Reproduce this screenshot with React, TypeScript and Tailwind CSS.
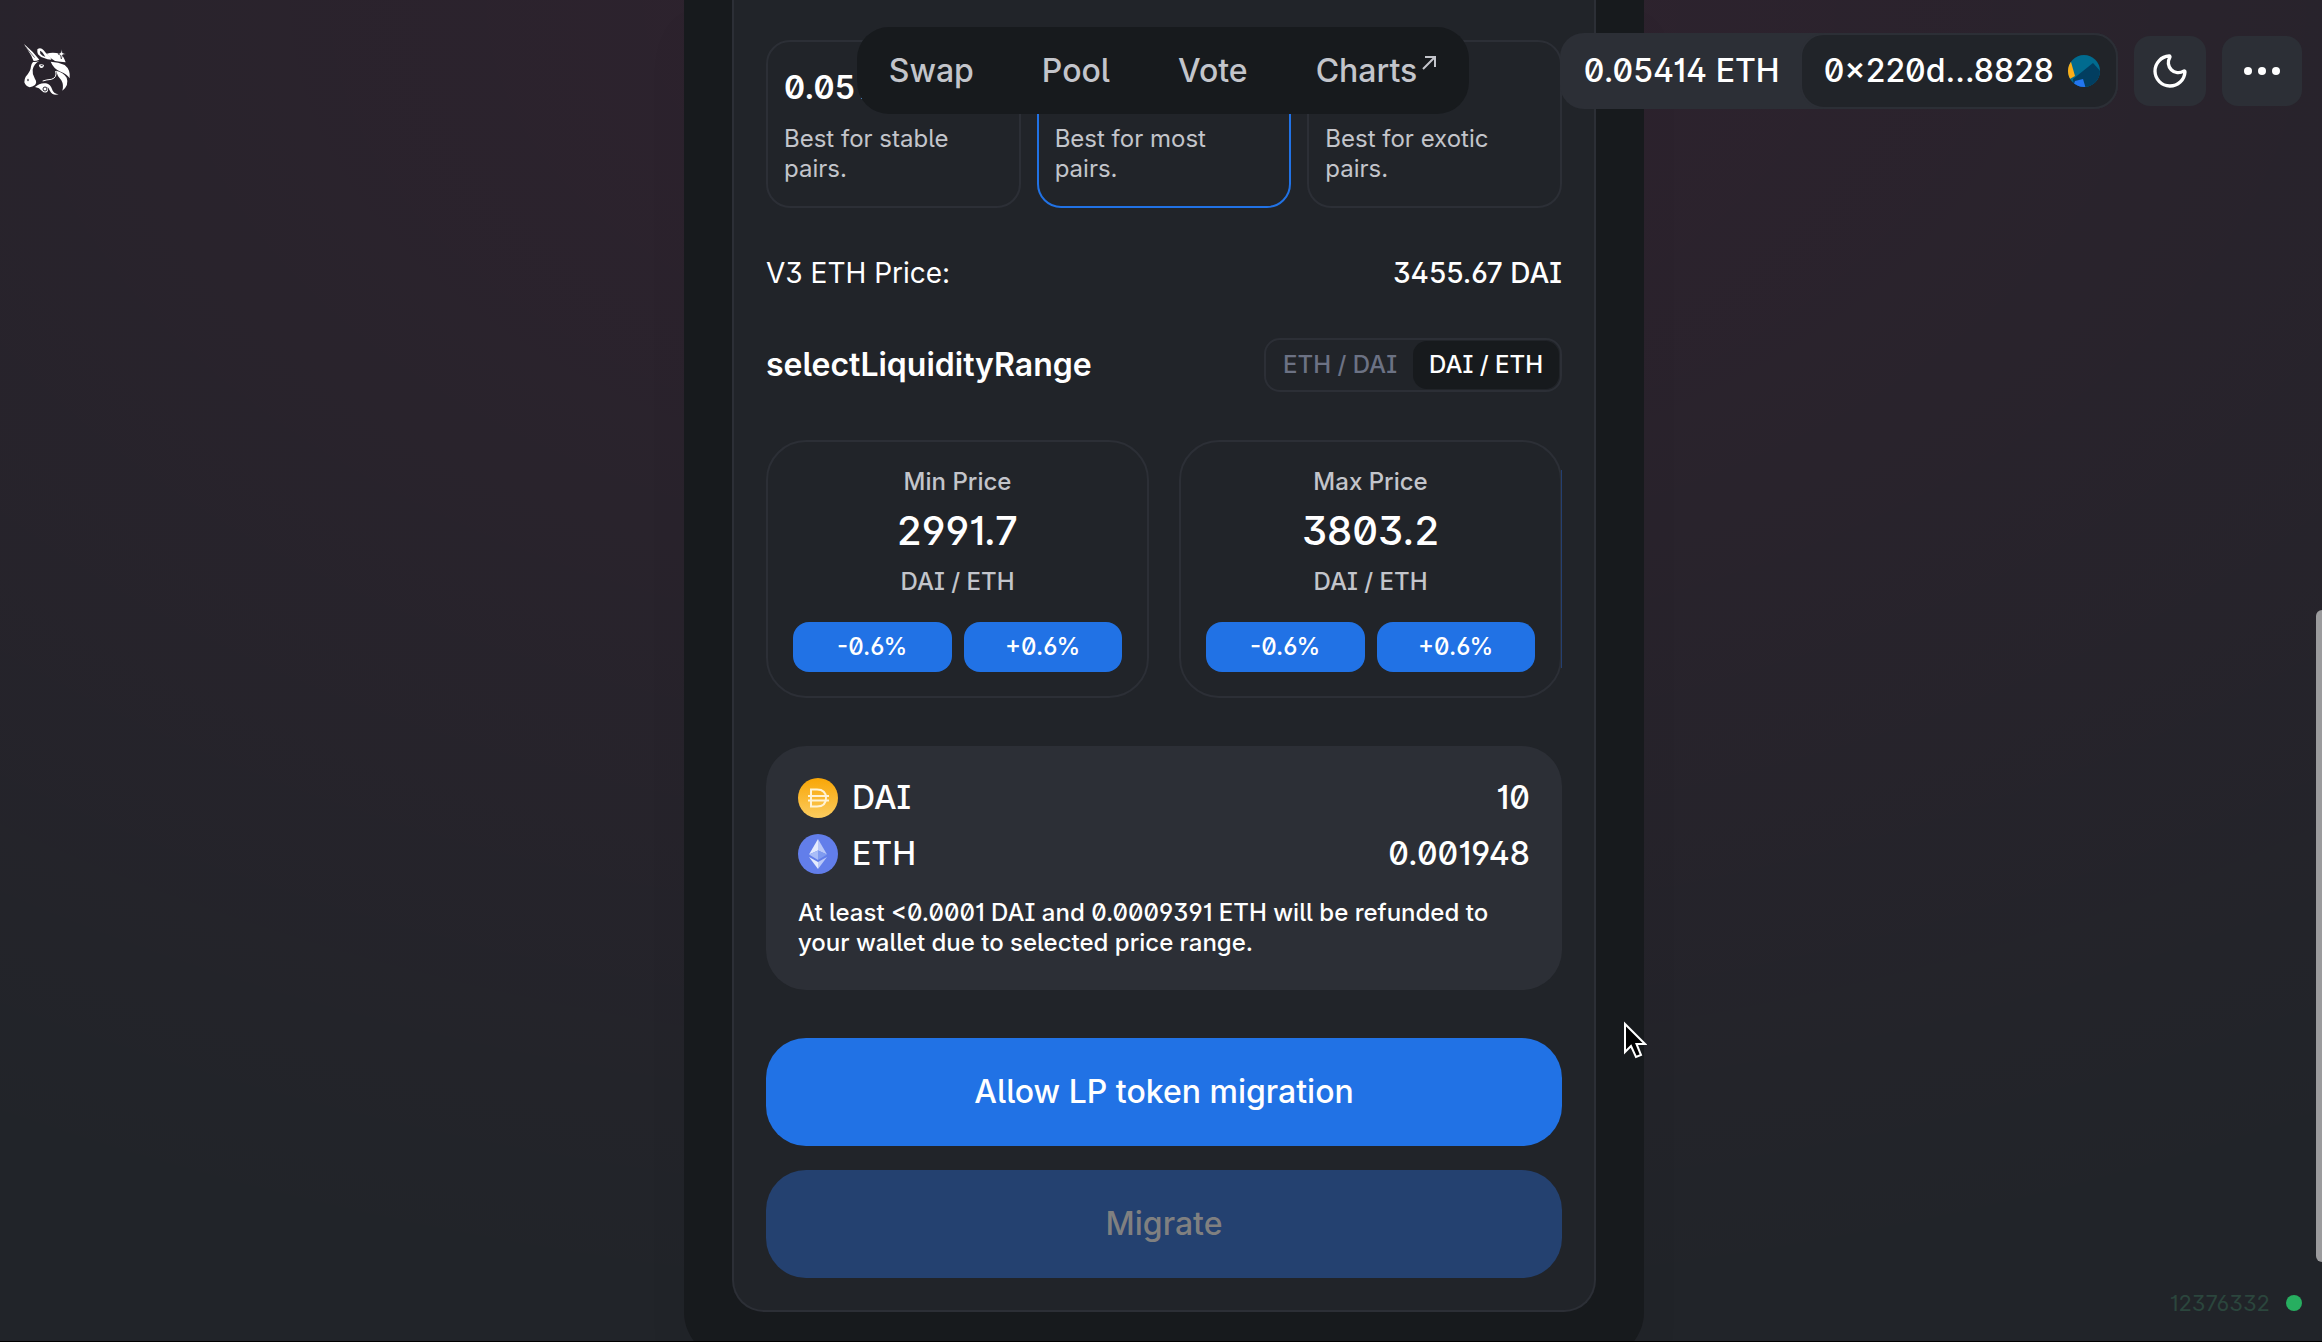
import type { ReactNode } from 'react'
import { Moon } from 'lucide-react'

const NAV_LINKS = ['Swap', 'Pool', 'Vote']

const FEES = [
  { name: '0.05% fee', title: '0.05%', text: 'Best for stable pairs.', selected: false },
  { name: '0.3% fee', title: '', text: 'Best for most pairs.', selected: true },
  { name: '1% fee', title: '', text: 'Best for exotic pairs.', selected: false },
]

function Logo() {
  return (
    <svg viewBox="24 0 144 192" className="h-16 w-12" fill="#fff">
      {/* horn and ear */}
      <path d="M24 15 Q52 38 70 62 Q62 66 53 66 Q49 58 46 50 Z" />
      <path d="M29 24 L56 56" stroke="#28252f" strokeWidth="2" />
      <path d="M64 31 Q74 24 83 34 Q88 42 99 50 Q104 55 106 62 Q94 62 84 57 Q72 54 66 46 Q63 38 64 31 Z" />
      <path d="M72 35 Q80 38 88 54 Q77 50 73 44 Z" fill="#28252f" />
      {/* mane */}
      <path d="M92 44 Q112 38 132 45 Q143 51 149 70 Q132 68 117 66 Q104 60 92 44 Z" />
      <path d="M137 30 L139 41 L149 45 L139 48 L136 60 L133 48 L126 45 L134 41 Z" stroke="#28252f" strokeWidth="2" />
      <path d="M104 68 Q128 69 146 78 Q164 92 161 118 Q152 104 134 98 Q113 90 104 68 Z" />
      <path d="M120 95 Q142 100 152 116 Q160 138 139 155 Q144 138 136 124 Q124 112 120 95 Z" />
      {/* face */}
      <path d="M51 69 Q61 70 70 66 Q54 74 50 92 Q48 106 57 120 Q64 130 57 138 Q49 143 41 145 Q29 142 25 130 Q25 120 29 113 Q44 98 45 82 Q46 74 51 69 Z" />
      <ellipse cx="36" cy="123" rx="2" ry="4" fill="#28252f" />
      <path d="M69 77 Q76 74 84 78 Q83 87 76 87 Q69 86 69 77 Z" />
      <path d="M74 80 h6" stroke="#28252f" strokeWidth="3" />
      <path d="M119 96 Q124 116 106 121 Q92 122 80 126" fill="none" stroke="#fff" strokeWidth="3" />
      {/* beard */}
      <path d="M57 144 Q72 130 90 133 Q104 137 108 150 Q112 165 128 166 Q108 170 102 156 Q98 145 91 142 Q100 150 94 158 Q86 164 78 156 Q70 146 57 144 Z" />
      <circle cx="87" cy="150" r="6" fill="none" stroke="#28252f" strokeWidth="3" />
    </svg>
  )
}

function DaiIcon() {
  return (
    <svg viewBox="0 0 40 40" className="size-10">
      <defs>
        <linearGradient id="dai" x1="0" y1="0" x2="0" y2="1">
          <stop offset="0" stopColor="#f9a606" />
          <stop offset="1" stopColor="#fbcc5f" />
        </linearGradient>
      </defs>
      <circle cx="20" cy="20" r="20" fill="url(#dai)" />
      <g fill="none" stroke="#fff3d6" strokeWidth="2">
        <path d="M13 11.500 h6 q9 0 9 8.500 q0 8.500 -9 8.500 h-6 z" />
        <path d="M10 18 h21 M10 22.500 h21" />
      </g>
    </svg>
  )
}

function EthIcon() {
  return (
    <svg viewBox="0 0 40 40" className="size-10">
      <circle cx="20" cy="20" r="20" fill="#627eea" />
      <path d="M20 5 L11 20.500 L20 16.500 Z" fill="#e4ebfd" />
      <path d="M20 5 L29 20.500 L20 16.500 Z" fill="#b9c8f8" />
      <path d="M11 20.500 L20 16.500 V26 Z" fill="#a9bdf7" />
      <path d="M29 20.500 L20 16.500 V26 Z" fill="#7f9bf0" />
      <path d="M11 23 L20 28 V35 Z" fill="#e4ebfd" />
      <path d="M29 23 L20 28 V35 Z" fill="#b9c8f8" />
    </svg>
  )
}

function Avatar() {
  return (
    <svg viewBox="0 0 32 32" className="size-8">
      <clipPath id="avatar">
        <circle cx="16" cy="16" r="16" />
      </clipPath>
      <g clipPath="url(#avatar)">
        <rect width="32" height="32" fill="#016b8f" />
        <path d="M25 8 L34 18 V34 H6 L5 24 Z" fill="#023e60" />
        <path d="M7 26 L15 24 L18 34 H4 Z" fill="#2376f0" />
        <path d="M-1 5 L3 7 L7 21 L0 25 Z" fill="#fcae16" />
      </g>
    </svg>
  )
}

function Header() {
  return (
    <header className="absolute inset-x-0 top-0 z-10 grid grid-cols-[1fr_auto_1fr] items-center pt-[27px] pr-5 pl-6">
      <a href="#home" aria-label="Home" className="w-12">
        <Logo />
      </a>
      <nav className="flex h-[87px] items-center gap-[68px] rounded-[32px] bg-[#171a1d] px-8 text-[32px] font-medium text-[#c3c5cb]">
        {NAV_LINKS.map((link) => (
          <a key={link} href={`#${link.toLowerCase()}`}>{link}</a>
        ))}
        <a href="#charts" className="flex items-center gap-0.5">
          Charts
          <svg viewBox="0 0 18 40" className="h-10 w-[18px]" fill="none" stroke="currentColor" strokeWidth="2">
            <path d="M4 18 L16 6 M6 6 H16 V16" />
          </svg>
        </a>
      </nav>
      <div className="flex items-center gap-4 justify-self-end">
        <div className="flex h-[76px] items-center rounded-3xl bg-[#2c2f36] pl-6 text-[32px] font-medium">
          <span className="pr-5">0.05414 ETH</span>
          <button className="flex h-[76px] items-center gap-[14px] rounded-3xl border-2 border-[#2c2f36] bg-[#212429] pr-4 pl-[22px]">
            0×220d...8828
            <Avatar />
          </button>
        </div>
        <button aria-label="Toggle theme" className="flex h-[70px] w-[72px] items-center justify-center rounded-2xl bg-[#2c2f36]">
          <Moon size={40} />
        </button>
        <button aria-label="More" className="flex h-[70px] w-20 items-center justify-center rounded-2xl bg-[#2c2f36]">
          <svg viewBox="0 0 36 8" className="h-2 w-9" fill="#fff">
            <circle cx="4" cy="4" r="4" />
            <circle cx="18" cy="4" r="4" />
            <circle cx="32" cy="4" r="4" />
          </svg>
        </button>
      </div>
    </header>
  )
}

interface FeeOptionProps {
  name: string
  title: string
  text: string
  selected: boolean
}

function FeeOption({ name, title, text, selected }: FeeOptionProps) {
  return (
    <button
      aria-label={name}
      className={`flex h-[168px] flex-col gap-4 rounded-3xl border-2 px-4 pt-[26px] text-left ${
        selected ? 'border-[#2172e5]' : 'border-[#2c2f36]'
      }`}
    >
      <span className="h-10 text-[32px] leading-10 font-semibold">{title}</span>
      <span className="w-48 text-2xl leading-[30px] text-[#c3c5cb]">{text}</span>
    </button>
  )
}

function StepButton({ children }: { children: ReactNode }) {
  return <button className="h-[50px] rounded-2xl bg-[#2172e5] text-2xl font-medium">{children}</button>
}

interface PriceCardProps {
  id: string
  label: string
  value: string
  active?: boolean
}

function PriceCard({ id, label, value, active }: PriceCardProps) {
  return (
    <div className="relative flex h-[258px] flex-col items-center rounded-[40px] border-2 border-[#2c2f36] px-[25px] pt-6">
      <label htmlFor={id} className="text-2xl leading-8 font-medium text-[#c3c5cb]">{label}</label>
      <input
        id={id}
        defaultValue={value}
        className="mt-2 h-[50px] w-full bg-transparent text-center text-[40px] font-medium outline-none"
      />
      <span className="mt-[10px] text-2xl leading-8 font-medium text-[#c3c5cb]">DAI / ETH</span>
      <div className="mt-6 grid w-full grid-cols-2 gap-3">
        <StepButton>-0.6%</StepButton>
        <StepButton>+0.6%</StepButton>
      </div>
      {active && <span className="absolute inset-y-7 -right-[2px] w-px bg-[#243f70]" />}
    </div>
  )
}

function TokenRow({ icon, symbol, amount }: { icon: ReactNode; symbol: string; amount: string }) {
  return (
    <div className="flex h-10 items-center gap-[14px] text-[32px] font-medium">
      {icon}
      <span>{symbol}</span>
      <span className="ml-auto">{amount}</span>
    </div>
  )
}

export default function App() {
  return (
    <div className="relative h-screen overflow-hidden border-b border-black bg-[#212429] bg-[radial-gradient(100vw_100vh_at_50%_0%,rgba(252,7,125,0.065),rgba(252,7,125,0))] pl-[6px] font-['Inter',sans-serif] text-white [font-feature-settings:'ss01','ss02','cv01','cv03']">
      <Header />

      <main className="mx-auto w-full max-w-[960px] rounded-b-[48px] bg-[#171a1d] px-12 pb-12 shadow-[0_32px_48px_rgba(0,0,0,0.04)]">
        <div className="flex flex-col gap-12 rounded-b-[32px] border-2 border-t-0 border-[#2c2f36] bg-[#212429] px-8 pt-10 pb-8">
          <div className="grid grid-cols-3 gap-4">
            {FEES.map((option) => (
              <FeeOption key={option.name} {...option} />
            ))}
          </div>

          <div className="flex items-center justify-between text-[28px] leading-[34px]">
            <span>V3 ETH Price:</span>
            <span className="font-medium">3455.67 DAI</span>
          </div>

          <div className="flex h-[54px] items-center justify-between">
            <h2 className="text-[32px] font-semibold">selectLiquidityRange</h2>
            <div className="flex h-[54px] rounded-2xl border-2 border-[#2c2f36] p-px text-2xl font-medium">
              <button className="px-4 text-[#6c7284]">ETH / DAI</button>
              <button className="rounded-[14px] bg-[#171a1d] px-4">DAI / ETH</button>
            </div>
          </div>

          <div className="grid grid-cols-2 gap-[30px]">
            <PriceCard id="min-price" label="Min Price" value="2991.7" />
            <PriceCard id="max-price" label="Max Price" value="3803.2" active />
          </div>

          <section className="flex h-[244px] flex-col gap-4 rounded-[40px] bg-[#2c2f36] p-8">
            <TokenRow icon={<DaiIcon />} symbol="DAI" amount="10" />
            <TokenRow icon={<EthIcon />} symbol="ETH" amount="0.001948" />
            <p className="mt-2 text-2xl leading-[30px] font-medium">
              At least &lt;0.0001 DAI and 0.0009391 ETH will be refunded to your wallet due to selected price range.
            </p>
          </section>

          <div className="flex flex-col gap-6 text-[32px] font-medium">
            <button className="h-[108px] rounded-[40px] bg-[#2172e5]">Allow LP token migration</button>
            <button disabled className="h-[108px] rounded-[40px] bg-[#244170] text-[#808080]">Migrate</button>
          </div>
        </div>
      </main>

      {/* block number */}
      <div className="absolute right-5 bottom-6 flex items-center gap-4 text-[22px] leading-7 text-[#2b463d]">
        12376332
        <span className="size-4 rounded-full bg-[#27ae60]" />
      </div>

      {/* scroll thumb */}
      <div className="absolute top-[610px] right-0 h-[652px] w-[6px] rounded-l-full bg-[#9b9b9d]" />

      {/* mouse pointer */}
      <svg viewBox="0 0 24 38" className="absolute top-[1021px] left-[1623px] h-[38px] w-6" fill="#000" stroke="#fff" strokeWidth="2">
        <path d="M2 3 V31 L8 25 L13 36 L18 34 L13.500 23 H22 Z" />
      </svg>
    </div>
  )
}
